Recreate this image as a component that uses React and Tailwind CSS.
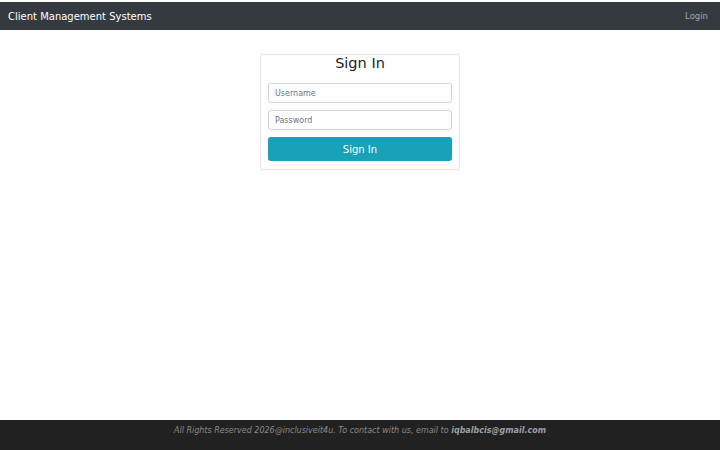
export default function App() {
  return (
    <div className="flex min-h-[450px] flex-col bg-white pt-[2px] font-['DejaVu_Sans',sans-serif]">
      <nav className="flex h-[28px] items-center justify-between bg-[#343a40] pl-2 pr-[12px]">
        <span className="text-[10px] text-white">Client Management Systems</span>
        <a className="text-[8.5px] text-[#a2a5a8]">Login</a>
      </nav>

      <main className="flex-1">
        <div className="mx-auto mt-[24px] w-[200px] rounded-[2px] border border-[#e3e3e3] px-[7px] pb-[8px]">
          <h2 className="mt-[-2px] text-center text-[14.5px] leading-[20px] text-[#222]">Sign In</h2>
          <input
            className="mt-[10px] block h-[20px] w-full rounded-[3px] border border-[#ced4da] px-[6px] text-[8px] placeholder:text-[#6c757d]"
            placeholder="Username"
          />
          <input
            type="password"
            className="mt-[7px] block h-[20px] w-full rounded-[3px] border border-[#ced4da] px-[6px] text-[8px] placeholder:text-[#6c757d]"
            placeholder="Password"
          />
          <button className="mt-[7px] block h-[24px] w-full rounded-[3px] bg-[#17a2b8] text-[10px] text-white">
            Sign In
          </button>
        </div>
      </main>

      <footer className="h-[30px] bg-[#212121] pt-[5px] text-center text-[8px] italic text-[#8a8a8a]">
        All Rights Reserved 2026@inclusiveit4u. To contact with us, email to{' '}
        <b className="text-[#9a9fa5]">iqbalbcis@gmail.com</b>
      </footer>
    </div>
  );
}
